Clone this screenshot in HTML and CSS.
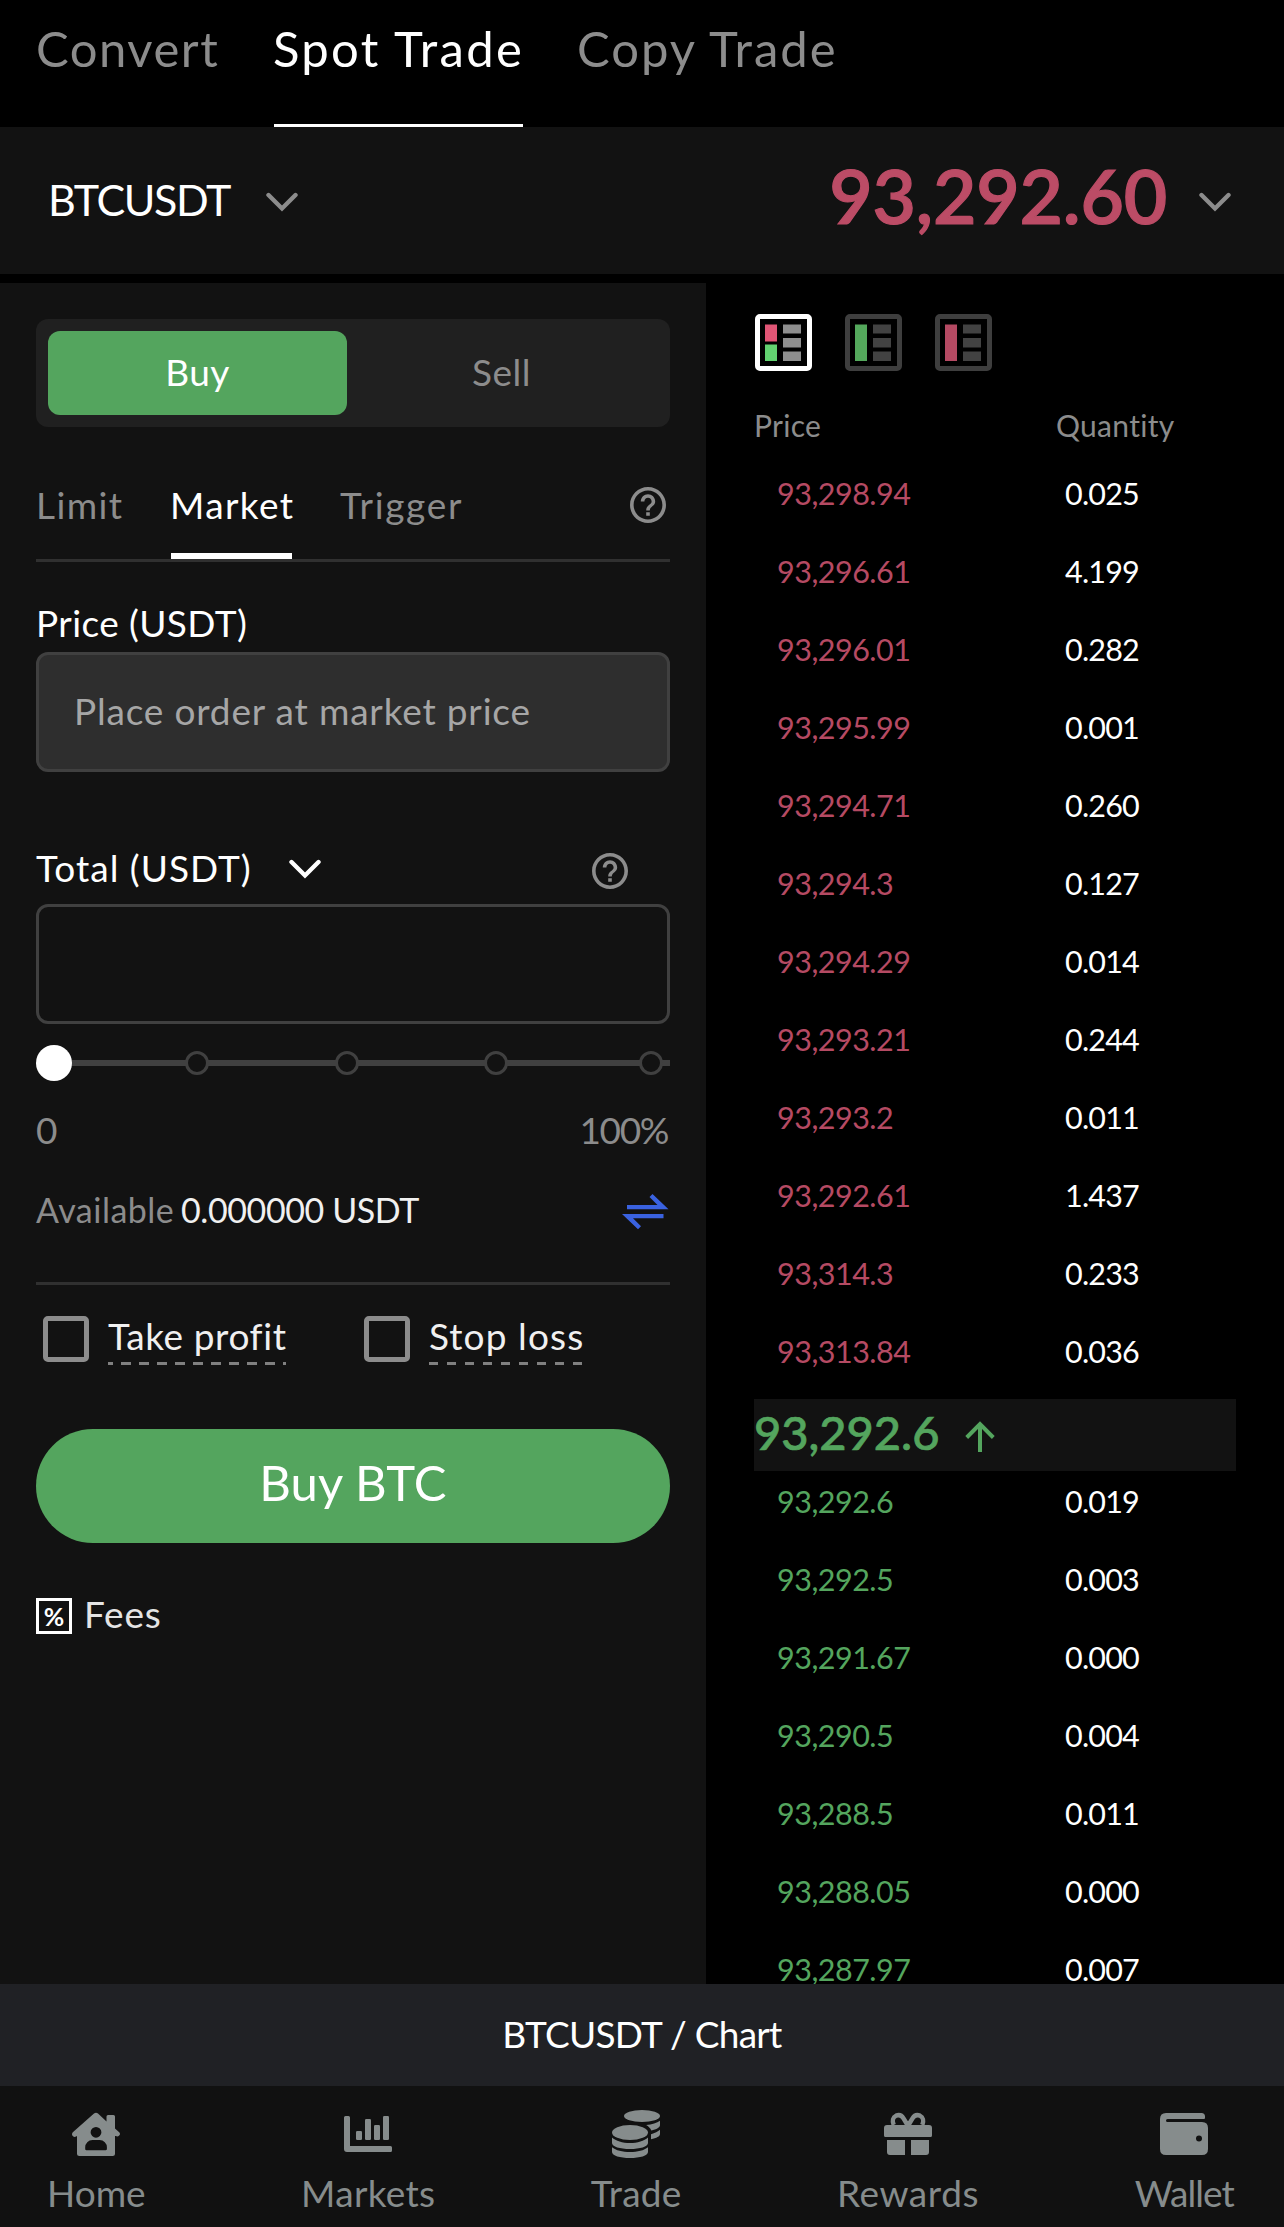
FILE: index.html
```html
<!DOCTYPE html>
<html lang="en">
<head>
<meta charset="utf-8">
<title>BTCUSDT Spot Trade</title>
<link rel="stylesheet" href="styles.css">
</head>
<body>
<svg class="defs" aria-hidden="true">
  <symbol id="help" viewBox="2 2 20 20"><path d="M11 18h2v-2h-2v2zm1-16C6.48 2 2 6.48 2 12s4.48 10 10 10 10-4.48 10-10S17.52 2 12 2zm0 18c-4.41 0-8-3.59-8-8s3.59-8 8-8 8 3.59 8 8-3.59 8-8 8zm0-14c-2.21 0-4 1.79-4 4h2c0-1.1.9-2 2-2s2 .9 2 2c0 2-3 1.75-3 5h2c0-2.25 3-2.5 3-5 0-2.21-1.79-4-4-4z"/></symbol>
  <symbol id="chevron" viewBox="0 0 32 20"><path d="M2.500 3 16 16.500 29.500 3" fill="none" stroke="currentColor" stroke-width="4.400" stroke-linecap="round"/></symbol>
</svg>

<nav class="modes">
  <a class="mode mode-convert">Convert</a>
  <a class="mode mode-spot active">Spot Trade</a>
  <a class="mode mode-copy">Copy Trade</a>
</nav>

<header class="pair">
  <span class="pair-name">BTCUSDT</span>
  <svg class="chev chev-pair"><use href="#chevron"/></svg>
  <span class="pair-price">93,292.60</span>
  <svg class="chev chev-price"><use href="#chevron"/></svg>
</header>

<main class="trade">
  <section class="form">
    <div class="side">
      <button class="side-btn buy">Buy</button>
      <button class="side-btn sell">Sell</button>
    </div>

    <div class="types">
      <a class="type type-limit">Limit</a>
      <a class="type type-market active">Market</a>
      <a class="type type-trigger">Trigger</a>
      <svg class="help help-types"><use href="#help"/></svg>
    </div>

    <div class="label price-label">Price (USDT)</div>
    <div class="field disabled">Place order at market price</div>

    <div class="label total-label">
      <span>Total (USDT)</span>
      <svg class="chev chev-total"><use href="#chevron"/></svg>
      <svg class="help help-total"><use href="#help"/></svg>
    </div>
    <div class="field"></div>

    <svg class="slider" viewBox="0 0 634 36">
      <path d="M18 18H634" stroke="#404040" stroke-width="6"/>
      <g fill="#121212" stroke="#404040" stroke-width="3">
        <circle cx="161" cy="18" r="10.500"/>
        <circle cx="311" cy="18" r="10.500"/>
        <circle cx="460" cy="18" r="10.500"/>
        <circle cx="615" cy="18" r="10.500"/>
      </g>
      <circle cx="18" cy="18" r="18" fill="#fff"/>
    </svg>
    <div class="scale"><span>0</span><span class="scale-max">100%</span></div>

    <div class="balance">
      <span class="balance-label">Available</span>
      <span class="balance-value">0.000000 USDT</span>
      <svg class="swap" viewBox="0 0 47 36"><path d="M5 11H35.500L27.500 3 30.500 0 46.500 15.300H5zM41.500 24.200H11L19 32.200 16 35.200 0 19.900H41.500z" fill="#3a62e0"/></svg>
    </div>

    <div class="options">
      <span class="box"></span><span class="option take">Take profit</span>
      <span class="box"></span><span class="option stop">Stop loss</span>
    </div>

    <button class="submit">Buy BTC</button>

    <div class="fees"><span class="fees-icon">%</span><span>Fees</span></div>
  </section>

  <section class="book">
    <div class="views">
      <svg class="view" viewBox="0 0 57 57"><rect x="2.500" y="2.500" width="52" height="52" rx="2.500" fill="none" stroke="#fff" stroke-width="5"/><path d="M10 10.500h12v17H10z" fill="#e05575"/><path d="M10 30.500h12v16.500H10z" fill="#62d170"/><path d="M28 10.500h18v9H28zM28 24h18v9.500H28zM28 37.500h18v9.500H28z" fill="#8e8e8e"/></svg>
      <svg class="view" viewBox="0 0 57 57"><rect x="2.500" y="2.500" width="52" height="52" rx="2.500" fill="none" stroke="#3e3e3e" stroke-width="5"/><path d="M10 10.500h12v36.500H10z" fill="#54a85c"/><path d="M28 10.500h18v9H28zM28 24h18v9.500H28zM28 37.500h18v9.500H28z" fill="#424242"/></svg>
      <svg class="view" viewBox="0 0 57 57"><rect x="2.500" y="2.500" width="52" height="52" rx="2.500" fill="none" stroke="#3e3e3e" stroke-width="5"/><path d="M10 10.500h12v36.500H10z" fill="#b54a63"/><path d="M28 10.500h18v9H28zM28 24h18v9.500H28zM28 37.500h18v9.500H28z" fill="#424242"/></svg>
    </div>
    <div class="book-head"><span>Price</span><span>Quantity</span></div>
    <div class="rows asks">
      <div class="row"><span class="p">93,298.94</span><span class="q">0.025</span></div>
      <div class="row"><span class="p">93,296.61</span><span class="q">4.199</span></div>
      <div class="row"><span class="p">93,296.01</span><span class="q">0.282</span></div>
      <div class="row"><span class="p">93,295.99</span><span class="q">0.001</span></div>
      <div class="row"><span class="p">93,294.71</span><span class="q">0.260</span></div>
      <div class="row"><span class="p">93,294.3</span><span class="q">0.127</span></div>
      <div class="row"><span class="p">93,294.29</span><span class="q">0.014</span></div>
      <div class="row"><span class="p">93,293.21</span><span class="q">0.244</span></div>
      <div class="row"><span class="p">93,293.2</span><span class="q">0.011</span></div>
      <div class="row"><span class="p">93,292.61</span><span class="q">1.437</span></div>
      <div class="row"><span class="p">93,314.3</span><span class="q">0.233</span></div>
      <div class="row"><span class="p">93,313.84</span><span class="q">0.036</span></div>
    </div>
    <div class="last">
      <span>93,292.6</span>
      <svg class="up" viewBox="0 0 30 31"><path d="M15 31V4M1.700 16.500 15 3.200 28.300 16.500" fill="none" stroke="#54a55e" stroke-width="4"/></svg>
    </div>
    <div class="rows bids">
      <div class="row"><span class="p">93,292.6</span><span class="q">0.019</span></div>
      <div class="row"><span class="p">93,292.5</span><span class="q">0.003</span></div>
      <div class="row"><span class="p">93,291.67</span><span class="q">0.000</span></div>
      <div class="row"><span class="p">93,290.5</span><span class="q">0.004</span></div>
      <div class="row"><span class="p">93,288.5</span><span class="q">0.011</span></div>
      <div class="row"><span class="p">93,288.05</span><span class="q">0.000</span></div>
      <div class="row"><span class="p">93,287.97</span><span class="q">0.007</span></div>
    </div>
  </section>
</main>

<div class="chart-bar">BTCUSDT / Chart</div>

<nav class="tabs">
  <a class="tab tab-home">
    <svg class="tab-icon" viewBox="0 0 48 48"><path fill-rule="evenodd" d="M22 3.500q2-1.600 4 0l8.500 8V6.500Q34.500 5 36 5h5.500Q43 5 43 6.500v12l4.200 3.800q1.600 1.700 0 3.300-1.700 1.600-3.300.5L43 26v17.500Q43 46 40.500 46h-33Q5 46 5 43.500V26l-.9.600q-1.800 1-3.300-.5-1.600-1.700 0-3.800zM24 16.900a5.400 5.400 0 1 0 0 10.800 5.400 5.400 0 0 0 0-10.800zM20.500 30a7.300 7.300 0 0 0-7.300 7.500V39q0 1.300 1.300 1.300h19q1.400 0 1.400-1.300v-1.500a7.300 7.300 0 0 0-7.300-7.500z"/></svg>
    <span>Home</span>
  </a>
  <a class="tab tab-markets">
    <svg class="tab-icon" viewBox="0 0 48 48"><path d="M1.500 6h3Q6 6 6 7.500V36h40.500q1.500 0 1.500 1.500v3q0 1.500-1.500 1.500H3q-3 0-3-3V7.500Q0 6 1.500 6z"/><rect x="12" y="21" width="6" height="9" rx="1.200"/><rect x="21" y="9" width="6" height="21" rx="1.200"/><rect x="30" y="15" width="6" height="15" rx="1.200"/><rect x="39" y="6" width="6" height="24" rx="1.200"/></svg>
    <span>Markets</span>
  </a>
  <a class="tab tab-trade">
    <svg class="tab-icon" viewBox="0 0 48 48"><ellipse cx="30" cy="6" rx="18" ry="6"/><ellipse cx="18" cy="22.500" rx="18" ry="7.500"/><path d="M0 27.500C3.800 31 10.500 33 18 33s14.200-2 18-5.500V33c0 3.700-8 6-18 6S0 36.700 0 33zM0 37.200C3.800 40.300 10.500 42 18 42s14.200-1.700 18-4.800V42c0 3.700-8 6-18 6S0 45.700 0 42zM48 10.700V15c0 2.400-3.400 4.400-8.700 5.400-.9-2.100-2.800-3.900-5.200-5.300 6-.5 10.900-2.100 13.900-4.400zM48 19.800V24c0 2.300-3.400 4.200-9 5.300v-5.100c3.900-.9 6.900-2.500 9-4.400z"/></svg>
    <span>Trade</span>
  </a>
  <a class="tab tab-rewards">
    <svg class="tab-icon" viewBox="0 0 48 48"><path d="M3 15h42q3 0 3 3v7.500q0 1.500-1.500 1.500h-45Q0 27 0 25.500V18q0-3 3-3zM3 30h18v15H6q-3 0-3-3zM27 30h18v12q0 3-3 3H27z"/><path d="M23.500 15 19.500 8.300C17.500 5 14.500 4.700 12 5.700 9 7 8 11 9.700 15M24.500 15l4-6.700C30.500 5 33.500 4.700 36 5.700c3 1.300 4 5.300 2.300 9.300" fill="none" stroke="#868c8c" stroke-width="4.500"/></svg>
    <span>Rewards</span>
  </a>
  <a class="tab tab-wallet">
    <svg class="tab-icon" viewBox="0 0 48 48"><path fill-rule="evenodd" d="M6 3h35.500Q45 3 45 6.500V8q0 1-1 1H7.500Q6 9 6 10.500T7.500 12H42q6 0 6 6v21q0 6-6 6H6q-6 0-6-6V9q0-6 6-6zM39 25.400a3 3 0 1 0 0 6 3 3 0 0 0 0-6z"/></svg>
    <span>Wallet</span>
  </a>
</nav>
</body>
</html>
```
FILE: styles.css
```css
* { box-sizing: border-box; }

body {
  margin: 0;
  width: 1284px;
  height: 2227px;
  overflow: hidden;
  background: #000;
  color: #fff;
  font-family: Lato, "Open Sans", sans-serif;
  font-size: 37px;
  white-space: nowrap;
}

button {
  border: 0;
  padding: 0;
  color: inherit;
  font: inherit;
}

.defs { display: none; }

/* Trading mode tabs */
.modes {
  display: flex;
  gap: 55px;
  height: 127px;
  padding-left: 36px;
}
.mode {
  height: 127px;
  font-size: 49px;
  line-height: 97px;
  letter-spacing: 1.5px;
  color: #8c8c8c;
}
.mode-convert { width: 183px; }
.mode-spot { width: 249px; letter-spacing: 2.3px; text-indent: -1px; }
.mode-copy { letter-spacing: 2px; margin-left: -1px; }
.mode.active {
  border-bottom: 3px solid #fff;
  line-height: 96px;
  color: #fff;
}

/* Pair and last price */
.pair {
  display: flex;
  align-items: flex-start;
  height: 147px;
  margin-bottom: 9px;
  padding: 0 53px 0 48px;
  background: #121212;
}
.pair-name {
  width: 218px;
  font-size: 43px;
  line-height: 146px;
  letter-spacing: -1.36px;
}
.pair-price {
  margin-left: auto;
  font-size: 75px;
  font-weight: 600;
  line-height: 136px;
  letter-spacing: -0.2px;
  color: #bc4c66;
  -webkit-text-stroke: 1.2px #bc4c66;
}
.chev { flex: none; width: 32px; height: 20px; color: #8c8c8c; }
.chev-pair { margin-top: 65px; }
.chev-price { margin: 65px 0 0 32px; }

/* Two-column body */
.trade {
  display: flex;
  height: 1701px;
  overflow: hidden;
}
.form {
  width: 706px;
  height: 1701px;
  padding: 36px 36px 0;
  background: #121212;
}

.side {
  display: flex;
  height: 108px;
  padding: 12px;
  border-radius: 12px;
  background: #202020;
}
.side-btn {
  height: 84px;
  line-height: 81px;
  padding-bottom: 3px;
  letter-spacing: 0.5px;
  border-radius: 12px;
  background: none;
}
.buy { width: 299px; background: #54a55e; }
.sell { flex: 1; padding-right: 2px; color: #8c8c8c; }

.types {
  display: flex;
  height: 95px;
  margin-top: 40px;
  border-bottom: 3px solid #303030;
}
.type {
  height: 92px;
  margin-right: 49px;
  line-height: 76px;
  letter-spacing: 1.4px;
  color: #8c8c8c;
}
.type-limit { width: 86px; }
.type-market { width: 121px; margin-right: 48px; text-indent: -1px; }
.type.active { border-bottom: 6px solid #fff; color: #fff; }
.help { flex: none; width: 36px; height: 36px; fill: #8c8c8c; }
.help-types { margin: 20px 4px 0 auto; }
.type-trigger { margin-right: 0; letter-spacing: 1.7px; }

.label {
  display: flex;
  line-height: 46px;
}
.price-label { margin: 38px 0 6px; letter-spacing: 0.4px; }
.total-label {
  height: 47px;
  margin: 72px 0 13px;
  line-height: 48px;
  letter-spacing: 1px;
}
.chev-total { margin: 15px 0 0 37px; color: #fff; }
.help-total { margin: 9px 42px 0 auto; }

.field {
  height: 120px;
  padding: 0 35px;
  border: 3px solid #404040;
  border-radius: 12px;
  line-height: 111px;
}
.field.disabled {
  background: #2e2e2e;
  color: #a6a6a6;
  letter-spacing: 0.82px;
}

.slider {
  display: block;
  width: 634px;
  height: 36px;
  margin-top: 21px;
}
.scale {
  display: flex;
  justify-content: space-between;
  margin-top: 26px;
  line-height: 46px;
  color: #8c8c8c;
}
.scale-max { margin-right: 2px; letter-spacing: -1.4px; }

.balance {
  display: flex;
  height: 99px;
  margin-top: 33px;
  border-bottom: 3px solid #303030;
  font-size: 34px;
  line-height: 47px;
}
.balance-label { width: 145px; letter-spacing: 0.5px; color: #8c8c8c; }
.balance-value { letter-spacing: -0.4px; color: #f0f0f0; }
.swap { width: 47px; height: 36px; margin: 8px 1px 0 auto; }

.options {
  display: flex;
  height: 49px;
  margin: 31px 0 64px 7px;
}
.box {
  width: 46px;
  height: 46px;
  margin-right: 19px;
  border: 5px solid #8c8c8c;
  border-radius: 5px;
}
.option {
  height: 49px;
  line-height: 40px;
  color: #f0f0f0;
  background: repeating-linear-gradient(90deg, #808080 0 9px, transparent 9px 18px) 0 100% / 100% 3px no-repeat;
}
.take {
  width: 178px;
  margin-right: 78px;
  letter-spacing: 0.6px;
  background-image: repeating-linear-gradient(90deg, #808080 0 5px, transparent 5px 13px, #808080 13px 18px);
}
.stop { width: 155px; letter-spacing: 1.1px; }

.submit {
  display: block;
  width: 634px;
  height: 114px;
  padding-bottom: 7px;
  border-radius: 57px;
  background: #54a55e;
  font-size: 49px;
  line-height: 107px;
  letter-spacing: 0.2px;
}

.fees {
  display: flex;
  gap: 12px;
  margin-top: 55px;
  line-height: 31px;
  letter-spacing: 0.8px;
  color: #e4e4e4;
}
.fees-icon {
  width: 36px;
  height: 36px;
  border: 3px solid #fff;
  color: #fff;
  font-size: 25px;
  font-weight: 700;
  letter-spacing: 0;
  line-height: 31px;
  text-align: center;
}

/* Order book */
.book {
  flex: 1;
  height: 1701px;
  padding: 31px 48px 0;
}
.views { display: flex; gap: 33px; height: 57px; padding-left: 1px; }
.view { width: 57px; height: 57px; }
.book-head {
  display: grid;
  grid-template-columns: 302px 1fr;
  margin: 34px 0 18px;
  font-size: 30px;
  line-height: 40px;
  letter-spacing: 0.3px;
  color: #8c8c8c;
}
.rows { display: grid; gap: 18px; padding-left: 23px; }
.row {
  display: grid;
  grid-template-columns: 288px 1fr;
  height: 60px;
  font-size: 30.5px;
  line-height: 61px;
}
.p { letter-spacing: -0.5px; }
.q { letter-spacing: -0.8px; }
.asks .p { color: #b54a63; }
.bids .p { color: #54a55e; }
.last {
  display: flex;
  width: 482px;
  height: 72px;
  margin-top: 18px;
  background: #121212;
  color: #54a55e;
  font-size: 47px;
  font-weight: 500;
  line-height: 67px;
  -webkit-text-stroke: 0.7px #54a55e;
}
.up { width: 30px; height: 31px; margin: 22px 0 0 26px; }

/* Chart drawer */
.chart-bar {
  height: 102px;
  background: #202125;
  line-height: 99px;
  letter-spacing: -0.7px;
  text-align: center;
}

/* Bottom navigation */
.tabs {
  display: flex;
  justify-content: space-between;
  height: 141px;
  padding: 24px 50px 0 47px;
  background: #111;
}
.tab {
  display: flex;
  flex-direction: column;
  align-items: center;
  gap: 11px;
  line-height: 47px;
  color: #868c8c;
}
.tab-icon { width: 48px; height: 48px; fill: #868c8c; }
.tab-markets { letter-spacing: 0.3px; }
.tab-trade { letter-spacing: 0.2px; }
.tab-rewards { letter-spacing: 0.6px; }
.tab-wallet { letter-spacing: -0.9px; }
```
